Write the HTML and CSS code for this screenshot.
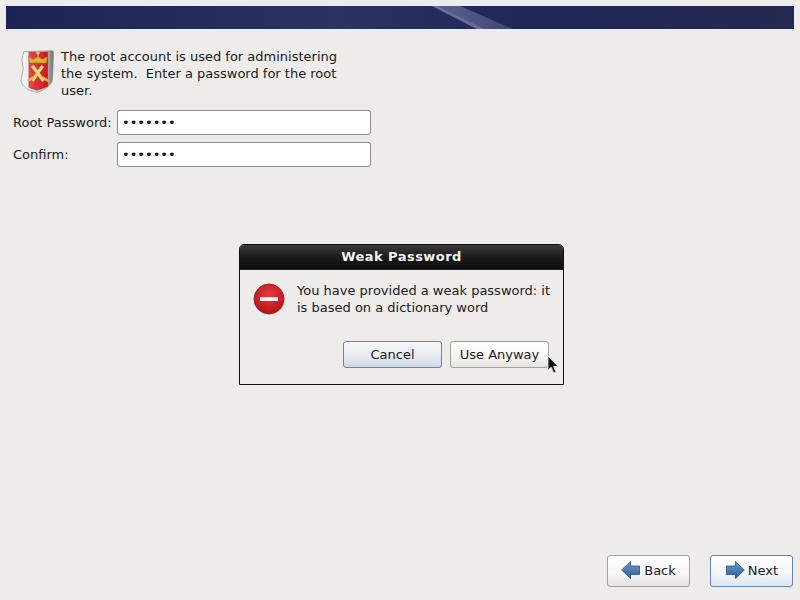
FILE: index.html
```html
<!DOCTYPE html>
<html lang="en">
<head>
<meta charset="utf-8">
<title>Root Password</title>
<link rel="stylesheet" href="styles.css">
</head>
<body>
<div class="page">
  <header class="banner"><div class="streak"></div><div class="streak-thin"></div></header>
  <main class="content">
    <div class="intro">
      <svg class="shield" width="34" height="45" viewBox="0 0 36 46">
        <defs>
          <linearGradient id="metal" x1="0" x2="1" y1="0" y2="0">
            <stop offset="0" stop-color="#f8f8f8"/><stop offset="0.3" stop-color="#e8e8e8"/><stop offset="0.75" stop-color="#c4c4c4"/><stop offset="1" stop-color="#6e6e6e"/>
          </linearGradient>
          <linearGradient id="redband" x1="0" x2="1" y1="0" y2="0">
            <stop offset="0" stop-color="#e8484a"/><stop offset="1" stop-color="#c9181d"/>
          </linearGradient>
        </defs>
        <path d="M4 2 L34 1 C35 1 35.5 2 35.5 3 L34.5 31 C34 37 26 43 18 45 C10 44 3 40 1 33 L3.5 20 L2 10 Z" fill="url(#metal)" stroke="#8c8c8c" stroke-width="0.7"/>
        <path d="M9 2 H29.5 V39 C25 41 21 42.5 18 43 C15 42.5 12 41.5 9 40 Z" fill="url(#redband)"/>
        <path d="M9 7 L14 10 L19 7 L24 10 L29 7 L28 14 H10 Z" fill="#e3b02e" stroke="#9a6f14" stroke-width="0.6"/>
        <path d="M19 1.5 V7 M16.8 3.6 H21.2" stroke="#f2dc86" stroke-width="1.3" fill="none"/>
        <path d="M24 17 L13 33 M13 17 L25 33" stroke="#eadb78" stroke-width="3.4" fill="none"/>
        <path d="M8 33 L14 29 M30 33 L24 29" stroke="#d9bd3c" stroke-width="2.6" fill="none"/>
      </svg>
      <p class="intro-text">The root account is used for administering the system.&nbsp; Enter a password for the root user.</p>
    </div>
    <div class="form">
      <label class="label" for="pw1">Root Password:</label>
      <input class="field" id="pw1" type="password" value="1234567">
      <label class="label" for="pw2">Confirm:</label>
      <input class="field" id="pw2" type="password" value="1234567">
    </div>
  </main>
  <footer class="footer">
    <button class="btn nav-btn" type="button">
      <svg width="20" height="20" viewBox="0 0 20 20"><defs><linearGradient id="arrow" x1="0" x2="0" y1="0" y2="1"><stop offset="0" stop-color="#6f9bd0"/><stop offset="1" stop-color="#2c5c9c"/></linearGradient></defs><path d="M0.7 10 L9.5 1.5 V6 H18.5 V14.5 H9.5 V18.5 Z" fill="url(#arrow)" stroke="#2a4f86" stroke-width="0.8" stroke-linejoin="round"/></svg>
      <span>Back</span>
    </button>
    <button class="btn btn-default nav-btn" type="button">
      <svg width="20" height="20" viewBox="0 0 20 20"><path d="M19.3 10 L10.5 1.5 V6 H1.5 V14.5 H10.5 V18.5 Z" fill="url(#arrow)" stroke="#2a4f86" stroke-width="0.8" stroke-linejoin="round"/></svg>
      <span>Next</span>
    </button>
  </footer>
</div>
<section class="dialog" role="dialog">
  <h1 class="dialog-title">Weak Password</h1>
  <div class="dialog-body">
    <div class="message">
      <svg class="stop" width="32" height="32" viewBox="0 0 32 32">
        <defs><radialGradient id="red" cx="0.5" cy="0.35" r="0.7"><stop offset="0" stop-color="#e8393c"/><stop offset="1" stop-color="#b20f14"/></radialGradient></defs>
        <circle cx="16" cy="16" r="15" fill="url(#red)" stroke="#a51216" stroke-width="0.8"/>
        <rect x="7" y="14" width="18" height="4" fill="#f7efee"/>
      </svg>
      <p class="message-text">You have provided a weak password: it is based on a dictionary word</p>
    </div>
    <div class="actions">
      <button class="btn btn-default cancel" type="button">Cancel</button>
      <button class="btn anyway" type="button">Use Anyway</button>
    </div>
  </div>
</section>
<svg class="cursor" width="13" height="20" viewBox="0 0 13 20"><path d="M1 1 V15 L4.2 12.2 L6.7 18 L9 17 L6.6 11.4 H11 Z" fill="#111" stroke="#eee" stroke-width="0.8"/></svg>
</body>
</html>
```

FILE: styles.css
```css
* { box-sizing: border-box; }
html, body { margin: 0; height: 100%; overflow: hidden; }
body {
  background: #edeceb;
  color: #1a1a1a;
  font-family: "DejaVu Sans", sans-serif;
  font-size: 13px;
  line-height: 17px;
}
.page {
  height: 600px;
  padding: 6px 6px 13px;
  display: flex;
  flex-direction: column;
}
.banner {
  height: 23px;
  flex: none;
  background: linear-gradient(90deg, #1b2455 0%, #2a3363 42%, #1f2859 65%, #25284f 100%);
  position: relative;
  overflow: hidden;
}
.streak {
  position: absolute;
  left: 429px;
  top: 0;
  width: 78px;
  height: 23px;
  background: linear-gradient(90deg, rgba(140,140,185,0.55), rgba(110,110,165,0.4));
  clip-path: polygon(0 0, 32% 0, 100% 100%, 62% 100%);
}
.streak-thin {
  position: absolute;
  left: 426px;
  top: 0;
  width: 52px;
  height: 23px;
  background: rgba(190,190,220,0.45);
  clip-path: polygon(0 0, 8% 0, 100% 100%, 86% 100%);
}
.content { flex: 1; }
.intro {
  display: flex;
  align-items: flex-start;
  width: 345px;
  margin: 19px 0 0 13px;
}
.shield { flex: none; margin: 1px 7px 0 1px; }
.intro-text { margin: 0; width: 290px; }
.form {
  display: grid;
  grid-template-columns: 104px 254px;
  row-gap: 7px;
  margin: 11px 0 0 7px;
  align-items: center;
}
.label { white-space: nowrap; }
.field {
  height: 25px;
  width: 254px;
  border: 1px solid #8e8c88;
  border-radius: 3px;
  background: #fff;
  padding: 0 4px;
  font: 13px "DejaVu Sans", sans-serif;
  color: #111;
  outline: none;
}
.btn {
  font: 13px/17px "DejaVu Sans", sans-serif;
  color: #1a1a1a;
  height: 27px;
  padding: 0;
  border: 1px solid #a3a19d;
  border-radius: 3px;
  background: linear-gradient(180deg, #fff 0%, #f8f7f6 55%, #e6e4e2 100%);
}
.btn-default {
  border-color: #6585b0;
  background: linear-gradient(180deg, #f5f7fa 0%, #e7ebf0 55%, #cdd9e8 100%);
}
.footer {
  display: flex;
  justify-content: flex-end;
  gap: 20px;
  height: 32px;
  padding: 0 1px 0 0;
}
.nav-btn {
  width: 83px;
  height: 32px;
  display: flex;
  align-items: center;
  justify-content: center;
  gap: 3px;
  padding-bottom: 2px;
}
.nav-btn.btn-default { background: linear-gradient(180deg, #fff 0%, #f4f6f9 55%, #dde5ef 100%); }
.dialog {
  position: absolute;
  left: 239px;
  top: 244px;
  width: 325px;
  height: 141px;
  border: 1px solid #111;
  border-radius: 5px 5px 0 0;
  display: flex;
  flex-direction: column;
  background: #edeceb;
}
.dialog-title {
  margin: 0;
  height: 25px;
  flex: none;
  background: linear-gradient(180deg, #3a3a3a 0%, #1c1c1c 50%, #0c0c0c 100%);
  border-bottom: 1px solid #1d2a3e;
  border-radius: 4px 4px 0 0;
  color: #f4f4f4;
  font: bold 13px/24px "DejaVu Sans", sans-serif;
  letter-spacing: 0.45px;
  text-align: center;
}
.dialog-body {
  flex: 1;
  display: flex;
  flex-direction: column;
  padding: 12px 14px 16px 13px;
}
.message { display: flex; gap: 12px; align-items: flex-start; margin-right: -10px; }
.stop { flex: none; margin-top: 1px; }
.message-text { margin: 0; width: 262px; }
.actions {
  margin-top: auto;
  display: flex;
  justify-content: flex-end;
  gap: 8px;
}
.cancel { width: 99px; }
.anyway { width: 99px; }
.cursor { position: absolute; left: 547px; top: 355px; }
```
